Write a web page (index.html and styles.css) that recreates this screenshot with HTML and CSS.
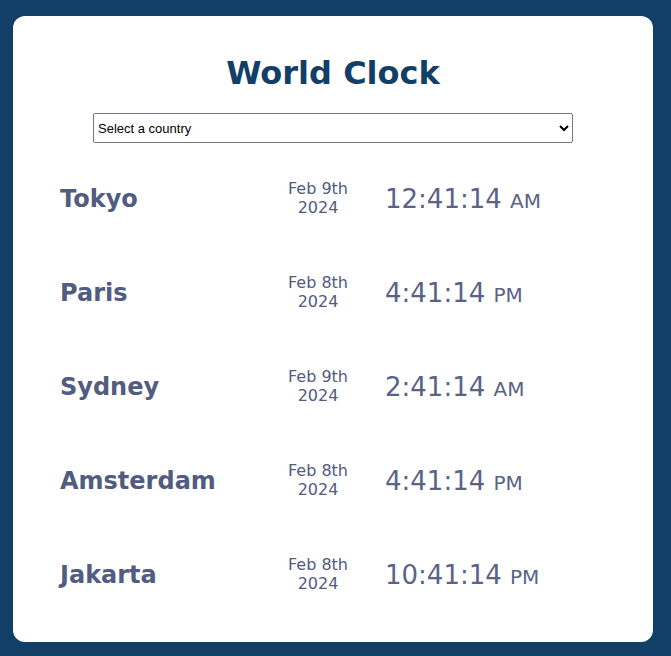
FILE: index.html
```html
<!DOCTYPE html>
<html lang="en">
<head>
<meta charset="utf-8">
<title>World Clock</title>
<link rel="stylesheet" href="styles.css">
</head>
<body>
<main class="card">
  <h1 class="title">World Clock</h1>
  <div class="picker">
    <select class="country-select">
      <option>Select a country</option>
    </select>
  </div>
  <div class="clock-list">
    <div class="clock-row">
      <div class="city">Tokyo</div>
      <div class="date">Feb 9th<br>2024</div>
      <div class="time">12:41:14 <span class="ampm">AM</span></div>
    </div>
    <div class="clock-row">
      <div class="city">Paris</div>
      <div class="date">Feb 8th<br>2024</div>
      <div class="time">4:41:14 <span class="ampm">PM</span></div>
    </div>
    <div class="clock-row">
      <div class="city">Sydney</div>
      <div class="date">Feb 9th<br>2024</div>
      <div class="time">2:41:14 <span class="ampm">AM</span></div>
    </div>
    <div class="clock-row">
      <div class="city">Amsterdam</div>
      <div class="date">Feb 8th<br>2024</div>
      <div class="time">4:41:14 <span class="ampm">PM</span></div>
    </div>
    <div class="clock-row">
      <div class="city">Jakarta</div>
      <div class="date">Feb 8th<br>2024</div>
      <div class="time">10:41:14 <span class="ampm">PM</span></div>
    </div>
  </div>
</main>
</body>
</html>
```
FILE: styles.css
```css
html, body {
  margin: 0;
  padding: 0;
}
body {
  background: #123f67;
  font-family: "DejaVu Sans", Verdana, sans-serif;
  padding: 16px 18px 15px 13px;
  min-height: 656px;
  box-sizing: border-box;
}
.card {
  width: 640px;
  box-sizing: border-box;
  background: #ffffff;
  border-radius: 12px;
  padding: 38px 0 20px 47px;
}
.title {
  margin: 0 47px 0 0;
  text-align: center;
  font-size: 32px;
  line-height: 38px;
  font-weight: bold;
  color: #123f67;
}
.picker {
  margin: 21px 0 9px 33px;
}
.country-select {
  display: block;
  width: 480px;
  height: 30px;
  font-family: "Liberation Sans", Arial, sans-serif;
  font-size: 13px;
  color: #000;
  background: #fff;
  border: 1px solid #767676;
  border-radius: 2px;
  padding: 0;
}
.clock-list {
  display: flex;
  flex-direction: column;
}
.clock-row {
  display: grid;
  grid-template-columns: 200px 116px 1fr;
  align-items: center;
  height: 94px;
  color: #525b80;
}
.city {
  font-size: 24px;
  font-weight: bold;
}
.date {
  text-align: center;
  font-size: 16px;
  line-height: 19px;
  padding-bottom: 3px;
}
.time {
  padding-left: 9px;
  font-size: 26px;
  color: #5a6386;
}
.ampm {
  font-size: 20px;
}
```
